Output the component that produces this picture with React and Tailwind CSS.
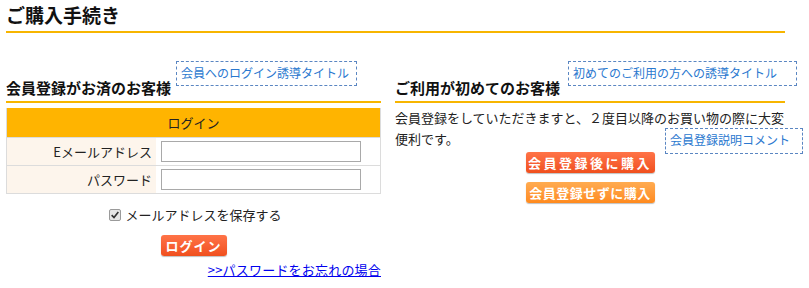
import React from "react";

const font = { fontFamily: '"Noto Sans CJK JP", "Noto Sans", sans-serif' };

function Dashed({ className, children }) {
  return (
    <div
      className={
        "border border-dashed border-[#5a86c2] text-[12px] leading-[16px] text-[#2a78cf] pl-[4px] pt-[3px] whitespace-nowrap " +
        className
      }
    >
      {children}
    </div>
  );
}

export default function App() {
  return (
    <div className="w-[809px] h-[288px] bg-white text-[#222] pl-[6px] overflow-hidden" style={font}>
      <div className="w-[779px] pt-[3px] pb-[4px] border-b-2 border-[#f7b500] text-[19px] leading-[24px] font-bold text-[#111]">
        ご購入手続き
      </div>
      <div className="flex gap-[14px]">
        {/* left */}
        <div className="relative w-[375px]">
          <div className="h-[70px] flex items-end pb-[3px] border-b-2 border-[#f7b500] text-[15px] leading-[20px] font-bold text-[#111]">
            会員登録がお済のお客様
          </div>
          <Dashed className="absolute left-[170px] top-[28px] w-[181px] h-[25px]">会員へのログイン誘導タイトル</Dashed>
          <div className="mt-[5px] border border-[#dcdcdc] border-t-0">
            <div className="h-[29px] bg-[#ffb400] flex items-center justify-center text-[13px] text-[#222]">
              ログイン
            </div>
            <div className="flex h-[28px] border-t border-[#dcdcdc]">
              <div className="w-[149px] bg-[#fdf5ec] flex items-center justify-end pr-[4px] text-[13px]">
                Eメールアドレス
              </div>
              <div className="flex-1 flex items-center pl-[5px]">
                <div className="w-[200px] h-[21px] border border-[#a9a9a9] bg-white"></div>
              </div>
            </div>
            <div className="flex h-[28px] border-t border-[#dcdcdc]">
              <div className="w-[149px] bg-[#fdf5ec] flex items-center justify-end pr-[4px] text-[13px]">
                パスワード
              </div>
              <div className="flex-1 flex items-center pl-[5px]">
                <div className="w-[200px] h-[21px] border border-[#a9a9a9] bg-white"></div>
              </div>
            </div>
          </div>
          <div className="mt-[12px] flex items-center justify-center gap-[4px] text-[13px] leading-[18px] pl-[4px]">
            <span className="w-[12px] h-[12px] rounded-[2px] border border-[#9a9a9a] bg-[#e6e6e6] flex items-center justify-center">
              <svg viewBox="0 0 12 12" className="w-[10px] h-[10px]">
                <path d="M2 6.2 L4.8 9 L10 2.5" fill="none" stroke="#333" strokeWidth="2" />
              </svg>
            </span>
            <span>メールアドレスを保存する</span>
          </div>
          <div className="mt-[11px] flex justify-center">
            <div className="w-[66px] h-[21px] rounded-[3px] bg-linear-to-b from-[#ff7347] to-[#f04f1c] shadow-[0_1px_1px_rgba(0,0,0,0.25)] text-white font-bold text-[13px] leading-[21px] text-center tracking-[1px]">
              ログイン
            </div>
          </div>
          <div className="mt-[5px] flex justify-end">
            <a href="#" className="text-[13px] leading-[18px] text-[#0000ee] underline tracking-[0.2px]">
              &gt;&gt;パスワードをお忘れの場合
            </a>
          </div>
        </div>
        {/* right */}
        <div className="relative w-[390px]">
          <div className="h-[70px] flex items-end pb-[3px] border-b-2 border-[#f7b500] text-[15px] leading-[20px] font-bold text-[#111]">
            ご利用が初めてのお客様
          </div>
          <Dashed className="absolute left-[173px] top-[28px] w-[229px] h-[25px]">初めてのご利用の方への誘導タイトル</Dashed>
          <div className="mt-[4px] text-[13px] leading-[21px] text-[#222]">
            <div className="whitespace-nowrap">会員登録をしていただきますと、２度目以降のお買い物の際に大変</div>
            <div className="flex h-[21px] items-start">
              <span>便利です。</span>
              <Dashed className="ml-auto mr-[-18px] w-[138px] h-[26px] shrink-0">会員登録説明コメント</Dashed>
            </div>
          </div>
          <div className="mt-[3px] flex flex-col items-center gap-[9px]">
            <div className="w-[129px] h-[21px] rounded-[3px] bg-linear-to-b from-[#ff7347] to-[#f04f1c] shadow-[0_1px_1px_rgba(0,0,0,0.25)] text-white font-bold text-[13px] leading-[21px] text-center tracking-[2.5px]">
              会員登録後に購入
            </div>
            <div className="w-[129px] h-[21px] rounded-[3px] bg-linear-to-b from-[#ffab50] to-[#ff8a1c] shadow-[0_1px_1px_rgba(0,0,0,0.25)] text-white font-bold text-[13px] leading-[21px] text-center tracking-[0.5px]">
              会員登録せずに購入
            </div>
          </div>
        </div>
      </div>
    </div>
  );
}
